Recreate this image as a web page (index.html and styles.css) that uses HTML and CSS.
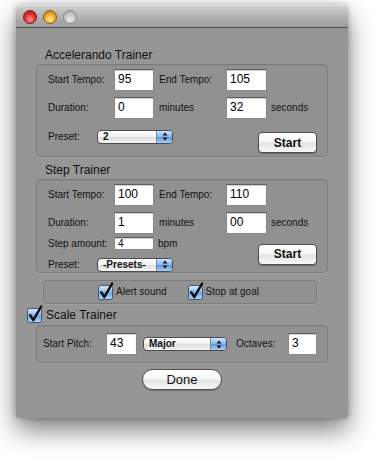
FILE: index.html
```html
<!DOCTYPE html>
<html>
<head>
<meta charset="utf-8">
<link rel="stylesheet" href="styles.css">
</head>
<body>
<div class="window">
  <div class="titlebar">
    <span class="light red"></span>
    <span class="light yellow"></span>
    <span class="light gray"></span>
  </div>
  <div class="content">
    <div class="section-title">Accelerando Trainer</div>
    <div class="group">
      <div class="row">
        <span class="lbl c1">Start Tempo:</span>
        <input class="field w40" value="95">
        <span class="lbl c3">End Tempo:</span>
        <input class="field w41" value="105">
      </div>
      <div class="row">
        <span class="lbl c1">Duration:</span>
        <input class="field w40" value="0">
        <span class="lbl c3">minutes</span>
        <input class="field w41" value="32">
        <span class="lbl c5">seconds</span>
      </div>
      <div class="action-row a1">
        <div class="mini-row">
          <span class="lbl cp">Preset:</span>
          <div class="popup pw76"><span class="ptext">2</span><span class="parrows"><svg width="6" height="9" viewBox="0 0 6 9"><path d="M3 0.5 L5.5 3.5 L0.5 3.5Z M3 8.5 L5.5 5.5 L0.5 5.5Z" fill="#111"/></svg></span></div>
        </div>
        <button class="btn start s1">Start</button>
      </div>
    </div>

    <div class="section-title t2">Step Trainer</div>
    <div class="group g2">
      <div class="row">
        <span class="lbl c1">Start Tempo:</span>
        <input class="field w40" value="100">
        <span class="lbl c3">End Tempo:</span>
        <input class="field w41" value="110">
      </div>
      <div class="row">
        <span class="lbl c1">Duration:</span>
        <input class="field w40" value="1">
        <span class="lbl c3">minutes</span>
        <input class="field w41" value="00">
        <span class="lbl c5">seconds</span>
      </div>
      <div class="action-row a2">
        <div class="left-col">
          <div class="mini-row">
            <span class="lbl c1">Step amount:</span>
            <input class="field small w40" value="4">
            <span class="lbl bpm">bpm</span>
          </div>
          <div class="mini-row">
            <span class="lbl cp">Preset:</span>
            <div class="popup pw76"><span class="ptext">-Presets-</span><span class="parrows"><svg width="6" height="9" viewBox="0 0 6 9"><path d="M3 0.5 L5.5 3.5 L0.5 3.5Z M3 8.5 L5.5 5.5 L0.5 5.5Z" fill="#111"/></svg></span></div>
          </div>
        </div>
        <button class="btn start">Start</button>
      </div>
    </div>

    <div class="alert-box">
      <label class="check-item">
        <svg class="cb" width="15" height="15" viewBox="0 0 15 15"><defs><linearGradient id="cbA" x1="0" y1="0" x2="0" y2="1"><stop offset="0" stop-color="#dcebfa"/><stop offset=".45" stop-color="#8fbdee"/><stop offset=".55" stop-color="#6fa8e6"/><stop offset="1" stop-color="#b5dafc"/></linearGradient></defs><rect x=".5" y=".5" width="14" height="14" rx="2" fill="url(#cbA)" stroke="#3f5678"/><path d="M3.2 7.2 L6.3 12.2 L14.2 -1.5" stroke="#0c0c0c" stroke-width="2.4" fill="none" stroke-linecap="round" stroke-linejoin="round"/></svg>
        <span class="lbl">Alert sound</span>
      </label>
      <label class="check-item">
        <svg class="cb" width="15" height="15" viewBox="0 0 15 15"><defs><linearGradient id="cbB" x1="0" y1="0" x2="0" y2="1"><stop offset="0" stop-color="#dcebfa"/><stop offset=".45" stop-color="#8fbdee"/><stop offset=".55" stop-color="#6fa8e6"/><stop offset="1" stop-color="#b5dafc"/></linearGradient></defs><rect x=".5" y=".5" width="14" height="14" rx="2" fill="url(#cbB)" stroke="#3f5678"/><path d="M3.2 7.2 L6.3 12.2 L14.2 -1.5" stroke="#0c0c0c" stroke-width="2.4" fill="none" stroke-linecap="round" stroke-linejoin="round"/></svg>
        <span class="lbl">Stop at goal</span>
      </label>
    </div>

    <label class="scale-row">
      <svg class="cb" width="15" height="15" viewBox="0 0 15 15"><defs><linearGradient id="cbC" x1="0" y1="0" x2="0" y2="1"><stop offset="0" stop-color="#dcebfa"/><stop offset=".45" stop-color="#8fbdee"/><stop offset=".55" stop-color="#6fa8e6"/><stop offset="1" stop-color="#b5dafc"/></linearGradient></defs><rect x=".5" y=".5" width="14" height="14" rx="2" fill="url(#cbC)" stroke="#3f5678"/><path d="M3.2 7.2 L6.3 12.2 L14.2 -1.5" stroke="#0c0c0c" stroke-width="2.4" fill="none" stroke-linecap="round" stroke-linejoin="round"/></svg>
      <span class="scale-title">Scale Trainer</span>
    </label>

    <div class="group g3">
      <span class="lbl sp">Start Pitch:</span>
      <input class="field w31" value="43">
      <div class="popup pw84"><span class="ptext">Major</span><span class="parrows"><svg width="6" height="9" viewBox="0 0 6 9"><path d="M3 0.5 L5.5 3.5 L0.5 3.5Z M3 8.5 L5.5 5.5 L0.5 5.5Z" fill="#111"/></svg></span></div>
      <span class="lbl oct">Octaves:</span>
      <input class="field w29" value="3">
    </div>

    <div class="done-row">
      <button class="btn done">Done</button>
    </div>
  </div>
</div>
</body>
</html>
```

FILE: styles.css
```css
html, body {
  margin: 0;
  padding: 0;
  background: #ffffff;
}

body {
  width: 384px;
  height: 463px;
  overflow: hidden;
  font-family: "Liberation Sans", Arial, sans-serif;
  color: #111;
}

.window {
  margin: 5px 0 0 16px;
  width: 332px;
  height: 413px;
  box-sizing: border-box;
  background: #969696;
  border-radius: 5px 5px 2px 2px;
  box-shadow: 0 12px 26px rgba(0, 0, 0, 0.5), 0 0 6px rgba(0, 0, 0, 0.25);
  display: flex;
  flex-direction: column;
}

.titlebar {
  height: 22px;
  flex: none;
  border-radius: 5px 5px 0 0;
  background: linear-gradient(#d2d2d2, #b4b4b4 50%, #9c9c9c);
  border-bottom: 1px solid #505050;
  display: flex;
  align-items: center;
  padding-left: 7px;
  gap: 6px;
  box-shadow: inset 0 1px 0 #e4e4e4;
}

.light {
  width: 14px;
  height: 14px;
  border-radius: 50%;
  box-sizing: border-box;
  margin-top: 1px;
}

.light.red {
  background: radial-gradient(circle at 50% 70%, #ff9a9a 0%, #e53535 45%, #a80f12 100%);
  border: 1px solid #7a1a1a;
}

.light.yellow {
  background: radial-gradient(circle at 50% 70%, #fff0a0 0%, #f4b02e 45%, #b86a0c 100%);
  border: 1px solid #8a5a12;
}

.light.gray {
  background: radial-gradient(circle at 50% 70%, #eaeaea 0%, #c6c6c6 50%, #9a9a9a 100%);
  border: 1px solid #8a8a8a;
}

.content {
  flex: 1;
  padding: 19px 20px 0 20px;
  display: flex;
  flex-direction: column;
}

.section-title {
  font-size: 12px;
  line-height: 16px;
  height: 16px;
  padding-left: 9px;
  color: #111;
}

.section-title.t2 {
  margin-top: 5px;
}

.group {
  margin-top: 1px;
  border: 1px solid #7c7c7c;
  border-radius: 4px;
  background: #919191;
  box-shadow: 0 1px 0 #a2a2a2, inset 0 1px 0 #888;
  padding: 4px 10px 3px 11px;
  display: flex;
  flex-direction: column;
  gap: 6px;
}

.group.g2 {
  padding-bottom: 1px;
}

.row {
  display: flex;
  align-items: center;
  height: 22px;
}

.lbl {
  font-size: 10px;
  line-height: 12px;
  white-space: nowrap;
  color: #111;
}

.c1 { width: 66px; flex: none; }
.c3 { width: 67px; padding-left: 5px; flex: none; }
.c5 { padding-left: 4px; }
.cp { width: 49px; flex: none; }
.bpm { padding-left: 4px; }

.field {
  box-sizing: border-box;
  height: 22px;
  margin: 0;
  border: 1px solid #8a8a8a;
  border-top-color: #5e5e5e;
  background: #fff;
  box-shadow: inset 0 1px 1px rgba(0, 0, 0, 0.2);
  font-family: "Liberation Sans", Arial, sans-serif;
  font-size: 12px;
  padding: 0 3px 3px 3px;
  color: #000;
  outline: none;
  flex: none;
}

.field.small {
  height: 13px;
  font-size: 10px;
  padding: 0 3px;
  line-height: 11px;
}

.w40 { width: 40px; }
.w41 { width: 41px; }
.w31 { width: 31px; }
.w29 { width: 29px; }

.action-row {
  display: flex;
  justify-content: space-between;
}

.action-row.a1 {
  margin-top: 5px;
  align-items: flex-start;
}

.action-row.a2 {
  margin-top: -3px;
  align-items: center;
}

.left-col {
  display: flex;
  flex-direction: column;
  gap: 8px;
}

.mini-row {
  display: flex;
  align-items: center;
  height: 13px;
}

.popup {
  box-sizing: border-box;
  height: 14px;
  border: 1px solid #4c4c4c;
  border-radius: 4px;
  background: linear-gradient(#ffffff, #f2f2f2 45%, #dedede 55%, #f4f4f4);
  display: flex;
  align-items: center;
  overflow: hidden;
  flex: none;
}

.pw76 { width: 76px; }
.pw84 { width: 84px; }

.ptext {
  flex: 1;
  font-size: 10px;
  font-weight: bold;
  padding-left: 5px;
  line-height: 12px;
  color: #111;
}

.parrows {
  width: 15px;
  height: 100%;
  border-left: 1px solid #6d8bb2;
  background: linear-gradient(#cfe3f8, #8bbbec 45%, #5f9de0 55%, #a8d0f6);
  display: flex;
  align-items: center;
  justify-content: center;
}

.btn {
  box-sizing: border-box;
  margin: 0;
  padding: 0;
  border: 1px solid #4e4e4e;
  background: linear-gradient(#ffffff, #f6f6f6 45%, #e4e4e4 55%, #f8f8f8);
  font-family: "Liberation Sans", Arial, sans-serif;
  color: #111;
  box-shadow: 0 1px 1px rgba(0, 0, 0, 0.25);
}

.btn.start {
  width: 59px;
  height: 21px;
  border-radius: 4px;
  font-size: 12px;
  font-weight: bold;
}

.btn.start.s1 {
  margin-top: 2px;
}

.alert-box {
  margin: 7px 11px 0 7px;
  height: 24px;
  box-sizing: border-box;
  border: 1px solid #7c7c7c;
  border-radius: 4px;
  background: #919191;
  box-shadow: 0 1px 0 #a2a2a2;
  display: flex;
  align-items: center;
  padding-left: 54px;
  gap: 21px;
}

.check-item {
  display: flex;
  align-items: center;
  gap: 3px;
}

.cb {
  overflow: visible;
  flex: none;
}

.scale-row {
  margin: 4px 0 0 -9px;
  display: flex;
  align-items: center;
  gap: 4px;
  height: 14px;
}

.scale-title {
  font-size: 12px;
  line-height: 14px;
  color: #111;
}

.group.g3 {
  margin-top: 3px;
  flex-direction: row;
  align-items: center;
  gap: 0;
  height: 38px;
  box-sizing: border-box;
  padding: 0 0 0 6px;
}

.sp { width: 63px; flex: none; }
.g3 .popup { margin-left: 6px; }
.oct { width: 52px; padding-left: 9px; flex: none; }

.done-row {
  display: flex;
  justify-content: center;
  margin-top: 6px;
}

.btn.done {
  width: 80px;
  height: 21px;
  border-radius: 11px;
  font-size: 13px;
  font-weight: normal;
}
```
